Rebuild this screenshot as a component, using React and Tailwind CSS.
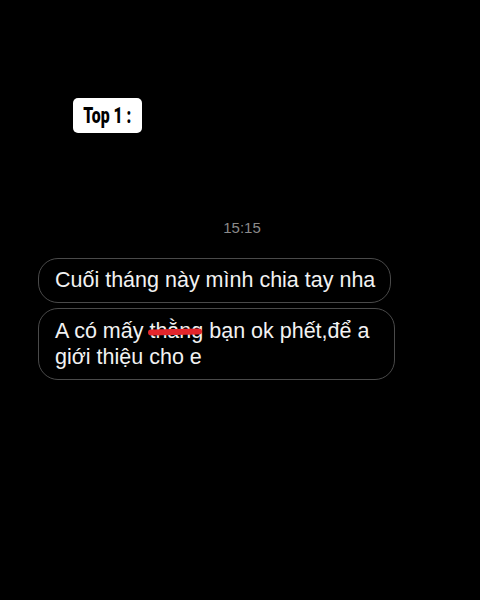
import React from "react";

export default function App() {
    return (
        <div className="w-[480px] h-[600px] bg-black flex flex-col" style={{ fontFamily: "'Liberation Sans', Arial, sans-serif" }}>
            <div className="pt-[98px] pl-[73px]">
                <div className="flex items-center justify-center w-[69px] h-[35px] bg-white rounded-[5px] text-black font-black text-[22px] leading-none">
                    <span className="inline-block scale-x-[0.72] whitespace-nowrap" style={{ fontFamily: "Roboto, sans-serif" }}>
                        Top 1 :
                    </span>
                </div>
            </div>

            <div className="mt-[84px] text-center text-[15px] text-[#8a8a8a] pl-[4px]">15:15</div>

            <div className="mt-[18px] pl-[38px] flex flex-col gap-[5px] items-start text-[#f2f2f2] text-[21.5px]">
                <div className="h-[45px] w-[353px] flex items-center pl-[16px] border border-[#4a4a4a] rounded-[20px] whitespace-nowrap">
                    Cuối tháng này mình chia tay nha
                </div>
                <div className="w-[357px] pl-[16px] pr-[10px] py-[9px] leading-[26px] border border-[#4a4a4a] rounded-[20px] whitespace-nowrap">
                    A có mấy{" "}
                    <span className="relative">
                        thằng
                        <span className="absolute left-[-1px] right-[1px] top-[10px] h-[6px] bg-[#e3262c] rounded-full -rotate-[1deg]"></span>
                    </span>{" "}
                    bạn ok phết,để a
                    <br />
                    giới thiệu cho e
                </div>
            </div>
        </div>
    );
}
